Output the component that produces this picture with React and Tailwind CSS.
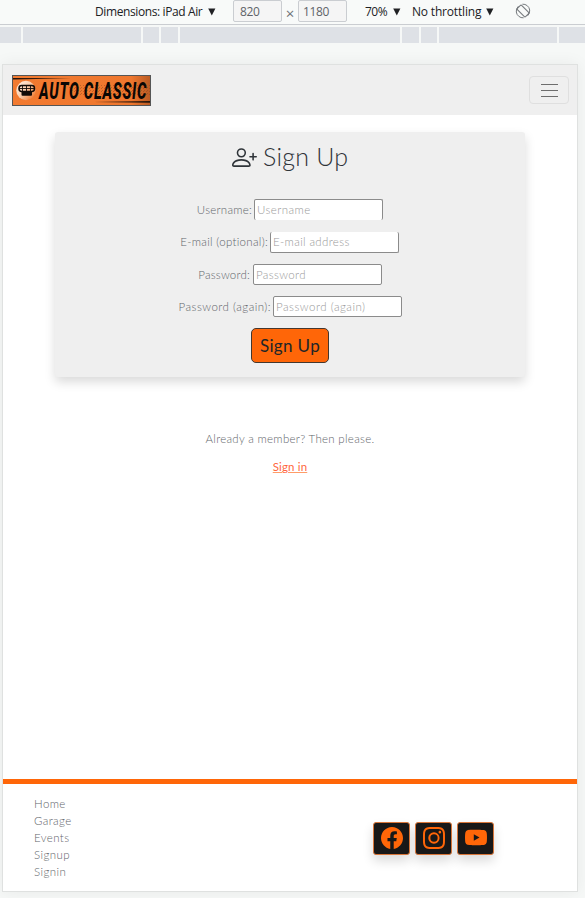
import { BsPersonPlus, BsFacebook, BsInstagram, BsYoutube } from "react-icons/bs";

function Caret({ className }) {
  return (
    <svg viewBox="0 0 8 8" className={`h-[8px] w-[8px] shrink-0 fill-[#202124] ${className}`}>
      <path d="M0.2 0.4h7.2L3.8 7.4z" />
    </svg>
  );
}

function Toolbar() {
  return (
    <div className="flex h-[25px] items-start border-b border-[#cacdd1] bg-[#f8faf9] font-['Open_Sans',sans-serif] text-[12px] leading-[24px] whitespace-nowrap text-[#202124]">
      <span className="ml-[95px] w-[108px] tracking-[-0.39px]">Dimensions: iPad Air</span>
      <Caret className="mt-[8px] ml-[5px]" />
      <span className="ml-[17px] h-[22px] w-[49px] rounded-[2px] border border-[#cacdd1] bg-[#f5f5f5] pl-[6px] leading-[22px] tracking-[-0.3px] text-[#5f6368]">820</span>
      <span className="mt-px w-[16px] text-center text-[15px] text-[#6e7276]">×</span>
      <span className="h-[22px] w-[49px] rounded-[2px] border border-[#cacdd1] bg-[#f5f5f5] pl-[4px] leading-[22px] tracking-[-0.4px] text-[#5f6368]">1180</span>
      <span className="ml-[18px] w-[24px] tracking-[-0.5px]">70%</span>
      <Caret className="mt-[8px] ml-[4px]" />
      <span className="ml-[11px] w-[70px] tracking-[-0.18px]">No throttling</span>
      <Caret className="mt-[8px] ml-[4px]" />
      <svg viewBox="0 0 16 16" className="mt-[3px] ml-[21px] h-[16px] w-[16px] fill-none stroke-[#777b7f]">
        <rect x="5" y="2.2" width="6" height="11.6" rx="1.2" transform="rotate(-45 8 8)" strokeWidth="1.1" />
        <path d="M1.3 9A6.8 6.8 0 0 1 3.4 3.2M7.4 1.2A6.8 6.8 0 0 1 14.7 7M14.7 7A6.8 6.8 0 0 1 12.6 12.8M8.6 14.8A6.8 6.8 0 0 1 1.3 9" strokeWidth="1" />
      </svg>
    </div>
  );
}

function Ruler() {
  return (
    <div className="mt-[2px] flex h-[16px] gap-[2px]">
      <div className="w-[21px] bg-[#dee1e6]" />
      <div className="w-[118px] bg-[#dee1e6]" />
      <div className="w-[16px] bg-[#dee1e6]" />
      <div className="w-[17px] bg-[#dee1e6]" />
      <div className="w-[220px] bg-[#dee1e6]" />
      <div className="w-[17px] bg-[#dee1e6]" />
      <div className="w-[16px] bg-[#dee1e6]" />
      <div className="w-[118px] bg-[#dee1e6]" />
      <div className="flex-1 bg-[#dee1e6]" />
    </div>
  );
}

function Logo() {
  return (
    <svg viewBox="0 0 139 31" className="h-[31px] w-[139px] overflow-visible">
      <defs>
        <linearGradient id="fade" x1="0" x2="1">
          <stop offset="0" stopColor="#f27a30" />
          <stop offset="0.86" stopColor="#ef772e" />
          <stop offset="1" stopColor="#b95a23" />
        </linearGradient>
        <linearGradient id="disc" x1="0" x2="1" y2="0.8">
          <stop offset="0" stopColor="#fff1e6" />
          <stop offset="0.5" stopColor="#fbd0b0" />
          <stop offset="1" stopColor="#ee772e" />
        </linearGradient>
        <pattern id="grain" width="3" height="3" patternUnits="userSpaceOnUse">
          <path d="M0 0h1v1H0zM2 1h1v1H2z" fill="#70401f" opacity="0.4" />
        </pattern>
      </defs>
      <rect x="0.5" y="0.5" width="138" height="30" fill="url(#fade)" stroke="#555" />
      <path d="M54 10h84v10H65z" fill="url(#grain)" />
      <path d="M1 3l58 .3L1 4.4zM138 27.7 82 27.1l56-1.1z" fill="#24140b" />
      <circle cx="14" cy="15.5" r="9.7" fill="url(#disc)" />
      <rect x="7" y="10.5" width="15.5" height="6" rx="2.7" fill="none" stroke="#120b07" strokeWidth="1.5" />
      <path d="M7 13.5h15M10.5 10.5v6M14.5 10.5v6M18.5 10.5v6" stroke="#120b07" strokeWidth="0.9" />
      <path d="M9.5 16.5h10.5v3.2q0 1-1 1h-8.5q-1 0-1-1z" fill="#120b07" />
      <g className="font-['Roboto',sans-serif] font-extrabold italic" fontSize="24.5">
        <g transform="translate(27 23.5) scale(0.6 1)">
          <text textLength="179" lengthAdjust="spacing" fill="#0b0704">AUTO CLASSIC</text>
        </g>
      </g>
    </svg>
  );
}

function Field({ label, hint, labelClass, inputClass, hintClass }) {
  return (
    <label className="flex h-[21px] items-center">
      <span className={`text-right whitespace-nowrap ${labelClass}`}>{label}</span>
      <input
        placeholder={hint}
        className={`h-[21px] w-[129px] rounded-[2px] border-[#8b8b8b] bg-white pl-[2px] placeholder:text-[#999] ${inputClass} ${hintClass}`}
      />
    </label>
  );
}

function Social({ children }) {
  return (
    <div className="flex h-[33px] w-[37px] items-center justify-center rounded-[3px] border border-[#d8763a] bg-[#181818] pb-px text-[22px] text-[#ff6608] shadow-[0_6px_11px_rgba(0,0,0,0.14)]">
      {children}
    </div>
  );
}

export default function App() {
  return (
    <div className="flex h-[898px] w-[585px] flex-col overflow-hidden bg-[#f6f8f7]">
      <Toolbar />
      <Ruler />
      <div className="mt-[21px] ml-[2px] flex h-[828px] w-[576px] flex-col border border-[#dfe1e0] bg-white font-['Lato',sans-serif] text-[11.5px] font-light text-[#5f666b] shadow-[0_0_16px_rgba(0,0,0,0.06)]">
        <header className="flex h-[50px] shrink-0 items-center justify-between bg-[#efefef] pr-[8px] pl-[9px]">
          <Logo />
          <button className="flex h-[28px] w-[40px] flex-col items-center justify-center gap-[5px] rounded-[4px] border border-[#dfdfdf]">
            <span className="h-px w-[17px] bg-[#6d6d6d]" />
            <span className="h-px w-[17px] bg-[#6d6d6d]" />
            <span className="h-px w-[17px] bg-[#6d6d6d]" />
          </button>
        </header>

        <main className="flex flex-1 flex-col">
          <section className="mt-[17px] ml-[52px] flex h-[245px] w-[470px] flex-col items-start rounded-[3px] bg-[#efefef] shadow-[0_5px_11px_rgba(0,0,0,0.15)]">
            <h1 className="mt-[9px] ml-[177px] flex h-[32px] items-center text-[25px] text-[#2f3439]">
              <BsPersonPlus className="h-[25px] w-[25px]" />
              <span className="ml-[6px] tracking-[0.22px] whitespace-nowrap">Sign Up</span>
            </h1>
            <form className="mt-[26px] flex flex-col gap-[11.4px]">
              <Field label="Username:" hint="Username" labelClass="w-[197px] tracking-[0.25px]" inputClass="ml-[2px] border-x border-t pb-[2px]" hintClass="tracking-[0.45px]" />
              <Field label="E-mail (optional):" hint="E-mail address" labelClass="w-[213px] tracking-[0.3px]" inputClass="ml-[2px] mt-px border-x border-b" hintClass="tracking-[0.35px]" />
              <Field label="Password:" hint="Password" labelClass="w-[196px] pr-px tracking-[0.22px]" inputClass="ml-[2px] border" hintClass="tracking-[0.35px]" />
              <Field label="Password (again):" hint="Password (again)" labelClass="w-[216px] tracking-[0.48px]" inputClass="ml-[2px] border" hintClass="tracking-[0.5px]" />
            </form>
            <button className="mt-[11px] ml-[196px] h-[35px] w-[78px] rounded-[5px] border border-[#44372f] bg-[#ff6608] pt-px text-[17px] font-normal tracking-[0.35px] whitespace-nowrap text-[#212529]">
              Sign Up
            </button>
          </section>

          <p className="mt-[54px] text-center leading-[16px] tracking-[0.3px]">Already a member? Then please.</p>
          <a className="mt-[12px] self-center leading-[16px] font-normal tracking-[0.15px] text-[#ff6640] underline decoration-[#ff9c68] underline-offset-[1px]">Sign in</a>
        </main>

        <footer className="flex h-[112px] shrink-0 border-t-[5px] border-[#ff6608]">
          <nav className="mt-[11px] ml-[31px] flex w-[339px] flex-col leading-[17px] tracking-[0.4px]">
            <a>Home</a>
            <a>Garage</a>
            <a>Events</a>
            <a>Signup</a>
            <a>Signin</a>
          </nav>
          <div className="mt-[38px] flex gap-[5px]">
            <Social><BsFacebook /></Social>
            <Social><BsInstagram /></Social>
            <Social><BsYoutube /></Social>
          </div>
        </footer>
      </div>
    </div>
  );
}
